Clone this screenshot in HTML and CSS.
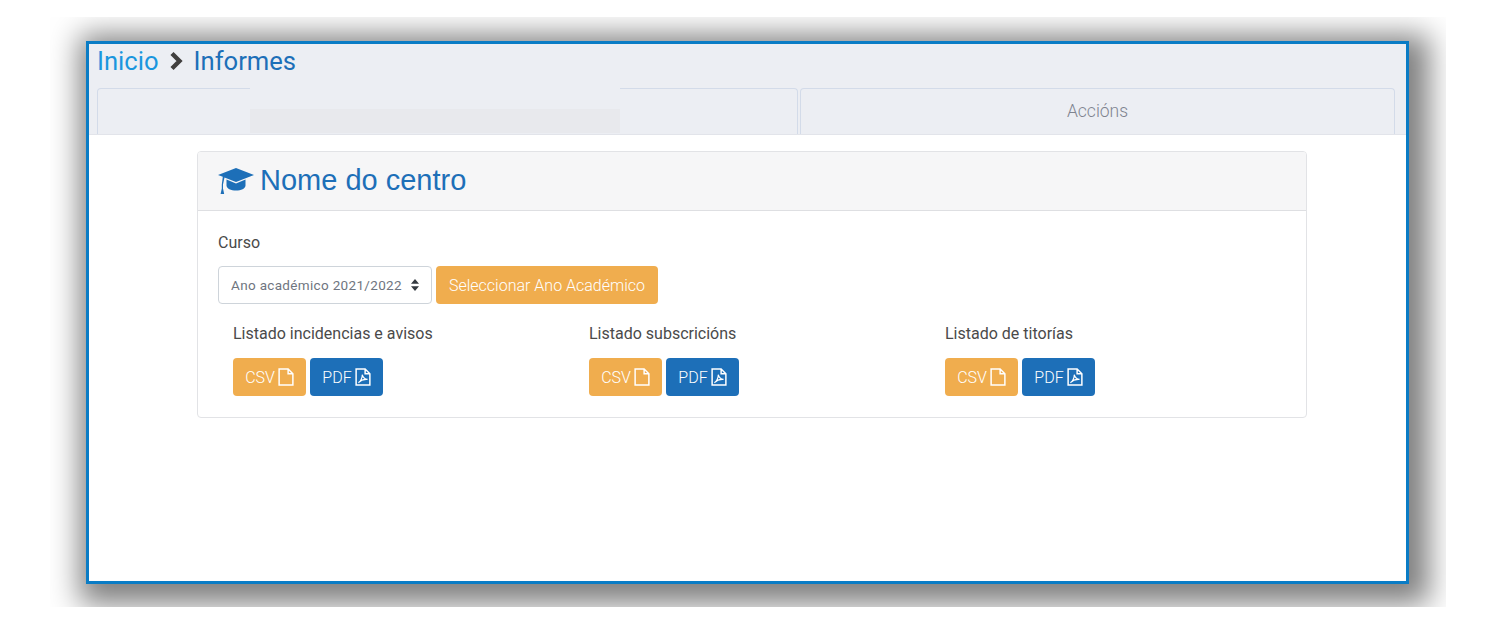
FILE: index.html
```html
<!DOCTYPE html>
<html lang="gl">
<head>
<meta charset="utf-8">
<title>Informes</title>
<link rel="stylesheet" href="styles.css">
</head>
<body>
<div class="clip">
  <div class="window">
    <header class="top">
      <nav class="crumbs">
        <a class="crumb-home">Inicio</a>
        <svg class="crumb-sep" viewBox="0 0 16 20"><path d="M4 2.500l7.500 7.500-7.500 7.500" fill="none" stroke="#413f3e" stroke-width="4.400"/></svg>
        <span class="crumb-now">Informes</span>
      </nav>
      <div class="tabs">
        <div class="tab tab-main"><div class="mask"><div class="mask-bar"></div></div></div>
        <div class="tab tab-side">Accións</div>
      </div>
    </header>
    <main class="content">
      <section class="panel">
        <div class="panel-head">
          <svg class="cap" viewBox="0 0 36 26"><path d="M18 0L36 7 18 14 6.500 9.500 5 16.500V20.500L6.200 26H2.600L3.800 20.500V16.500L4.800 8.800 0 7z" fill="#1d6fb8"/><path d="M8.500 11.500L18 15.500 27.500 11.500V17.500C27.500 20.500 23 22.500 18 22.500S8.500 20.500 8.500 17.500z" fill="#1d6fb8"/></svg>
          <h1 class="panel-title">Nome do centro</h1>
        </div>
        <div class="panel-body">
          <label class="field-label" for="curso">Curso</label>
          <div class="year-row">
            <div class="select-wrap">
              <select class="select" id="curso"><option>Ano académico 2021/2022</option></select>
              <svg class="select-arrows" viewBox="0 0 8 12"><path d="M4 0l4 4.800H0zM4 12L0 7.200h8z" fill="#343a40"/></svg>
            </div>
            <button class="btn btn-orange btn-wide">Seleccionar Ano Académico</button>
          </div>
          <div class="reports">
            <div class="report">
              <div class="report-title">Listado incidencias e avisos</div>
              <div class="report-actions">
                <button class="btn btn-orange">CSV<svg class="ico" viewBox="0 0 15 17"><path d="M1 1h8.500L14 5.500V16H1zM9.500 1v4.500H14" fill="none" stroke="#fff" stroke-width="1.400"/></svg></button>
                <button class="btn btn-blue">PDF<svg class="ico" viewBox="0 0 15 17"><path d="M1 1h8.500L14 5.500V16H1zM9.500 1v4.500H14" fill="none" stroke="#fff" stroke-width="1.400"/><path d="M3.200 13.800C5 13 7 9 6.800 6.300 7.500 9 9 10.500 11.800 10.800 9 10.500 5.500 11.500 3.200 13.800z" fill="none" stroke="#fff" stroke-width="1.100"/></svg></button>
              </div>
            </div>
            <div class="report">
              <div class="report-title">Listado subscricións</div>
              <div class="report-actions">
                <button class="btn btn-orange">CSV<svg class="ico" viewBox="0 0 15 17"><path d="M1 1h8.500L14 5.500V16H1zM9.500 1v4.500H14" fill="none" stroke="#fff" stroke-width="1.400"/></svg></button>
                <button class="btn btn-blue">PDF<svg class="ico" viewBox="0 0 15 17"><path d="M1 1h8.500L14 5.500V16H1zM9.500 1v4.500H14" fill="none" stroke="#fff" stroke-width="1.400"/><path d="M3.200 13.800C5 13 7 9 6.800 6.300 7.500 9 9 10.500 11.800 10.800 9 10.500 5.500 11.500 3.200 13.800z" fill="none" stroke="#fff" stroke-width="1.100"/></svg></button>
              </div>
            </div>
            <div class="report">
              <div class="report-title">Listado de titorías</div>
              <div class="report-actions">
                <button class="btn btn-orange">CSV<svg class="ico" viewBox="0 0 15 17"><path d="M1 1h8.500L14 5.500V16H1zM9.500 1v4.500H14" fill="none" stroke="#fff" stroke-width="1.400"/></svg></button>
                <button class="btn btn-blue">PDF<svg class="ico" viewBox="0 0 15 17"><path d="M1 1h8.500L14 5.500V16H1zM9.500 1v4.500H14" fill="none" stroke="#fff" stroke-width="1.400"/><path d="M3.200 13.800C5 13 7 9 6.800 6.300 7.500 9 9 10.500 11.800 10.800 9 10.500 5.500 11.500 3.200 13.800z" fill="none" stroke="#fff" stroke-width="1.100"/></svg></button>
              </div>
            </div>
          </div>
        </div>
      </section>
    </main>
  </div>
</div>
</body>
</html>
```
FILE: styles.css
```css
* { box-sizing: border-box; }
html, body { margin: 0; background: #fff; }
body { font-family: Roboto, "Liberation Sans", sans-serif; font-size: 16px; color: #4a4a4a; height: 625px; overflow: hidden; }

.clip { margin: 17px 0 0 50px; width: 1396px; height: 590px; padding: 24px 37px 23px 36px; overflow: hidden; }
.window { height: 543px; border: 3px solid #0a7cc5; background: #fff; box-shadow: 7px 7px 28px 13px rgba(0,0,0,.5); display: flex; flex-direction: column; }

.top { background: #eceef3; height: 91px; flex: none; padding: 0 11px 0 8px; display: flex; flex-direction: column; border-bottom: 1px solid #e2e4ea; }
.crumbs { height: 34px; margin-bottom: 10px; display: flex; align-items: center; font-size: 25.600px; line-height: 34px; }
.crumb-home { color: #1a96de; }
.crumb-sep { width: 16px; height: 20px; margin: 0 10px 0 9px; }
.crumb-now { color: #1d6fb8; }

.tabs { flex: 1; display: flex; gap: 2px; }
.tab { border: 1px solid #d3dbe9; border-bottom: 0; border-radius: 4px 4px 0 0; height: 46px; }
.tab-main { width: 701px; position: relative; }
.tab-side { flex: 1; text-align: center; line-height: 44px; font-size: 17.500px; font-weight: 300; color: #7f8490; }
.mask { position: absolute; left: 152px; top: -1px; width: 370px; height: 46px; background: #eceef3; display: flex; flex-direction: column; justify-content: flex-end; }
.mask-bar { height: 24px; margin-bottom: 1px; background: #e8e9ed; }

.content { padding: 16px 99px 0 108px; }
.panel { border: 1px solid #e2e3e6; border-radius: 4px; height: 267px; background: #fff; }
.panel-head { height: 59px; background: #f6f6f7; border-bottom: 1px solid #dedfe2; border-radius: 3px 3px 0 0; display: flex; align-items: center; padding: 0 20px; }
.cap { width: 36px; height: 26px; margin-right: 6px; }
.panel-title { margin: 0 0 2px; font-family: "Liberation Sans", Arial, sans-serif; font-weight: 400; font-size: 29px; color: #1d6fb8; }

.panel-body { padding: 22px 20px 0; }
.field-label { display: block; line-height: 20px; height: 20px; }
.year-row { display: flex; gap: 4px; margin-top: 13px; }
.select-wrap { position: relative; width: 214px; height: 38px; }
.select { appearance: none; -webkit-appearance: none; width: 100%; height: 100%; border: 1px solid #ced4da; border-radius: 4px; background: #fff; padding: 0 12px; font-family: Roboto, sans-serif; font-size: 13.500px; letter-spacing: .33px; color: #6f7580; }
.select-arrows { position: absolute; right: 13px; top: 13px; width: 8px; height: 12px; }

.btn { height: 38px; border: 0; border-radius: 4px; font-family: Roboto, sans-serif; font-size: 16px; font-weight: 300; color: #fff; padding: 0; display: inline-flex; align-items: center; justify-content: center; }
.btn-orange { background: #f0ad4e; width: 73px; }
.btn-blue { background: #1d6fb8; width: 73px; }
.btn-wide { width: 222px; }
.ico { width: 16px; height: 18px; margin-left: 3px; }

.reports { display: grid; grid-template-columns: repeat(3, 356px); padding: 20px 15px 0; }
.report-title { line-height: 20px; }
.report-actions { display: flex; gap: 4px; margin-top: 14px; }
```
